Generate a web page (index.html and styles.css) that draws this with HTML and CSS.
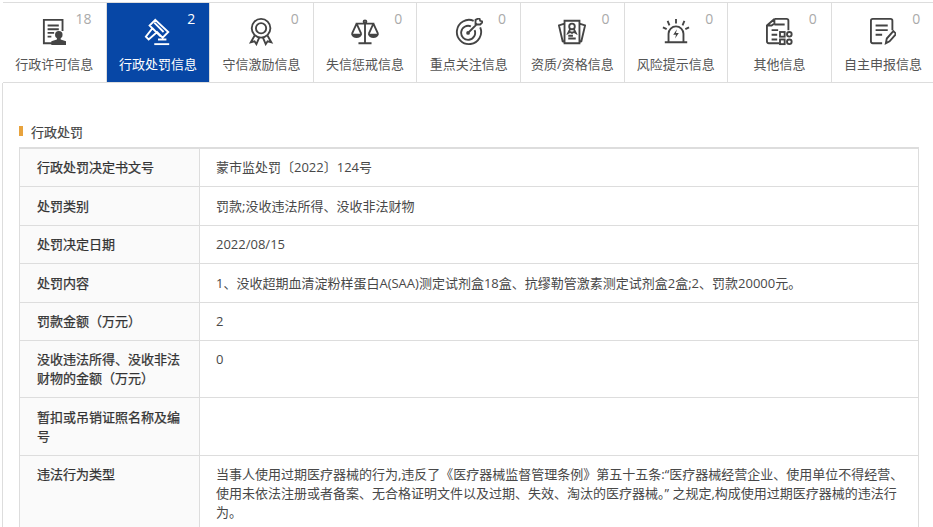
FILE: index.html
```html
<!DOCTYPE html>
<html lang="zh-CN">
<head>
    <meta charset="UTF-8">
    <title>行政处罚信息</title>
    <link rel="stylesheet" href="styles.css">
</head>
<body>

<!-- 信息分类 -->
<div class="tabs">
    <div class="tab">
        <span class="count">18</span>
        <svg class="icon" viewBox="0 0 26 30"><path d="M12 27H2V2h20v12M6 8h12M6 12h12M6 16h7M6 20h4"/><circle class="solid" cx="18" cy="18" r="4"/><path class="solid" d="M10 29v-4l6-2v-2h4v2l6 2v4z"/></svg>
        <div class="tab-name">行政许可信息</div>
    </div>
    <div class="tab active">
        <span class="count">2</span>
        <svg class="icon" viewBox="0 0 30 30"><path d="M12 2L6 8l3 3-7 9 3 3 9-8 6 6 6-6zM9 11l9 9M11 5l10 10M15 23h9"/><path d="M11 28h16"/></svg>
        <div class="tab-name">行政处罚信息</div>
    </div>
    <div class="tab">
        <span class="count">0</span>
        <svg class="icon" viewBox="0 0 28 30"><circle cx="14" cy="11" r="10"/><circle cx="14" cy="11" r="5.500"/><path d="M7 19l-4 7 4-1 2 3 3-7M21 19l4 7-4-1-2 3-3-7"/></svg>
        <div class="tab-name">守信激励信息</div>
    </div>
    <div class="tab">
        <span class="count">0</span>
        <svg class="icon" viewBox="0 0 30 30"><path d="M15 4v23M8 27h14M5 6h20M6 6L1 17M6 6l5 11M24 6l-5 11M24 6l5 11"/><circle cx="15" cy="4" r="1.500"/><path class="solid" d="M0 17h12c-1 6-11 6-12 0zM18 17h12c-1 6-11 6-12 0z"/></svg>
        <div class="tab-name">失信惩戒信息</div>
    </div>
    <div class="tab">
        <span class="count">0</span>
        <svg class="icon" viewBox="0 0 30 30"><path d="M20 3a13 13 0 1 0 7 7M17 9a7.500 7.500 0 1 0 4 4M15 15l9-9M22 2v5h5l3-3-3-1-1-3z"/><circle class="solid" cx="14" cy="16" r="2"/></svg>
        <div class="tab-name">重点关注信息</div>
    </div>
    <div class="tab">
        <span class="count">0</span>
        <svg class="icon" viewBox="0 0 30 30"><path d="M7 3h16v24H7zM7 6L1 8l4 17 2 1M23 6l6 2-4 17-2 1M11 19h5M11 22h8"/><circle cx="15" cy="9" r="3"/><path d="M13 12l-2 4 2-1 2 1 2-1 2 1-2-4"/></svg>
        <div class="tab-name">资质/资格信息</div>
    </div>
    <div class="tab">
        <span class="count">0</span>
        <svg class="icon" viewBox="0 0 30 30"><path d="M7 25V17a8 8 0 0 1 16 0v8M3 26h24M15 1v5M6 3l2 5M24 3l-2 5M1 10l4 2M29 10l-4 2"/><path class="solid" d="M16 12l-4 6h3l-1 4 4-6h-3z"/></svg>
        <div class="tab-name">风险提示信息</div>
    </div>
    <div class="tab">
        <span class="count">0</span>
        <svg class="icon" viewBox="0 0 28 30"><path d="M9 1h13a2 2 0 0 1 2 2v10M9 1L1 8v17a2 2 0 0 0 2 2h11M9 1v5l-3 2H1M9 7h11M6 13h7M6 18h6M6 23h6"/><rect x="15" y="15" width="5" height="5"/><rect x="15" y="23" width="5" height="5"/><circle cx="25" cy="17.500" r="2.500"/><circle cx="25" cy="25.500" r="2.500"/></svg>
        <div class="tab-name">其他信息</div>
    </div>
    <div class="tab">
        <span class="count">0</span>
        <svg class="icon" viewBox="0 0 28 30"><path d="M13 27H3a2 2 0 0 1-2-2V3a2 2 0 0 1 2-2h19a2 2 0 0 1 2 2v10M6 8h13M6 13h13M6 18h7M17 27l1-5 7-8 3 3-7 8z"/></svg>
        <div class="tab-name">自主申报信息</div>
    </div>
</div>

<div class="content">
    <h3 class="section-title">行政处罚</h3>
    <div class="detail">
        <div class="row">
            <div class="label">行政处罚决定书文号</div>
            <div class="value">蒙市监处罚〔2022〕124号</div>
        </div>
        <div class="row">
            <div class="label">处罚类别</div>
            <div class="value">罚款;没收违法所得、没收非法财物</div>
        </div>
        <div class="row">
            <div class="label">处罚决定日期</div>
            <div class="value">2022/08/15</div>
        </div>
        <div class="row">
            <div class="label">处罚内容</div>
            <div class="value">1、没收超期血清淀粉样蛋白A(SAA)测定试剂盒18盒、抗缪勒管激素测定试剂盒2盒;2、罚款20000元。</div>
        </div>
        <div class="row">
            <div class="label">罚款金额（万元）</div>
            <div class="value">2</div>
        </div>
        <div class="row">
            <div class="label">没收违法所得、没收非法财物的金额（万元）</div>
            <div class="value">0</div>
        </div>
        <div class="row">
            <div class="label">暂扣或吊销证照名称及编号</div>
            <div class="value"></div>
        </div>
        <div class="row">
            <div class="label">违法行为类型</div>
            <div class="value">当事人使用过期医疗器械的行为,违反了《医疗器械监督管理条例》第五十五条:“医疗器械经营企业、使用单位不得经营、使用未依法注册或者备案、无合格证明文件以及过期、失效、淘汰的医疗器械。” 之规定,构成使用过期医疗器械的违法行为。</div>
        </div>
    </div>
</div>

</body>
</html>
```

FILE: styles.css
```css
html, body {
    height: 100%;
}
body {
    margin: 0;
    padding-top: 2px;
    box-sizing: border-box;
    overflow: hidden;
    background-color: #fff;
    color: #484848;
    font-family: "Open Sans", "Noto Sans CJK SC", sans-serif;
    font-size: 13px;
}
.tabs {
    display: flex;
    height: 79px;
    margin-left: 3px;
    margin-right: -4px;
    border-top: 1px solid #ddd;
    border-bottom: 1px solid #ddd;
}
.tab {
    position: relative;
    flex: 0 0 103.600px;
    box-sizing: border-box;
    border-right: 1px solid #ddd;
    text-align: center;
    color: #555;
}
.tab.active {
    background-color: #0747a6;
    color: #fff;
}
.icon {
    display: block;
    height: 28px;
    margin: 15px auto 0;
    fill: none;
    stroke: #444;
    stroke-width: 2;
}
.icon .solid {
    fill: #444;
    stroke: none;
}
.active .icon {
    stroke: #fff;
}
.tab-name {
    margin-top: 8px;
    line-height: 20px;
}
.count {
    position: absolute;
    top: 8px;
    right: 14px;
    font-size: 14px;
    line-height: 16px;
    color: #aaa;
}
.active .count {
    color: #fff;
}
.content {
    margin-left: 2px;
    margin-right: 14px;
    padding: 41px 0 0 16px;
    border-left: 1px solid #ddd;
}
.section-title {
    position: relative;
    margin: 0 0 7px;
    padding-left: 12px;
    font-size: 13px;
    font-weight: 400;
    line-height: 16px;
    color: #444;
    -webkit-text-stroke: 0.2px #444;
}
.section-title::before {
    content: "";
    position: absolute;
    left: 0;
    top: 2px;
    width: 4px;
    height: 10px;
    background-color: #e8a33d;
}
.detail {
    border: 1px solid #ddd;
    border-top-width: 2px;
    border-bottom: none;
}
.row {
    display: flex;
    border-bottom: 1px solid #ddd;
    line-height: 19px;
}
.label {
    flex: 0 0 180px;
    box-sizing: border-box;
    padding: 9.400px 17px 9px;
    background-color: #fafafa;
    border-right: 1px solid #ddd;
    color: #333;
    -webkit-text-stroke: 0.25px #333;
}
.value {
    flex: 1;
    padding: 9.400px 14px 9px 16px;
}
```
